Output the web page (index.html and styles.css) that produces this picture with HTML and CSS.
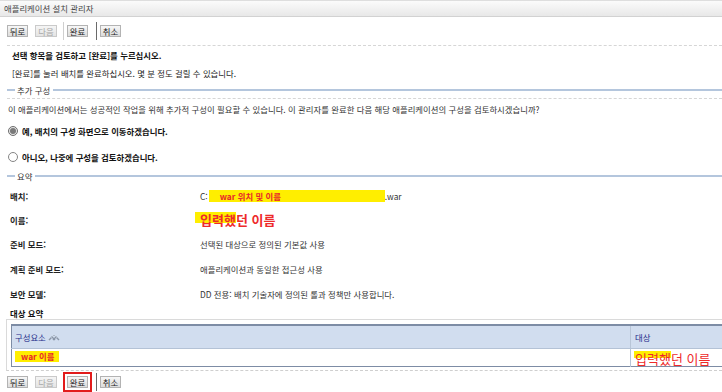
FILE: index.html
```html
<!DOCTYPE html>
<html lang="ko">
<head>
<meta charset="utf-8">
<title>애플리케이션 설치 관리자</title>
<link rel="stylesheet" href="styles.css">
</head>
<body>
<div class="titlebar">애플리케이션 설치 관리자</div>
<div class="page">
  <div class="toolbar">
    <button class="btn">뒤로</button>
    <button class="btn disabled b-next">다음</button>
    <span class="sep s1"></span>
    <button class="btn b-finish">완료</button>
    <span class="sep dark s2"></span>
    <button class="btn b-cancel">취소</button>
  </div>
  <div class="dash d1"></div>
  <p class="msg bold m1">선택 항목을 검토하고 [완료]를 누르십시오.</p>
  <p class="msg m2">[완료]를 눌러 배치를 완료하십시오. 몇 분 정도 걸릴 수 있습니다.</p>
  <div class="section sec1"><span>추가 구성</span></div>
  <div class="dash d2"></div>
  <p class="para">이 애플리케이션에서는 성공적인 작업을 위해 추가적 구성이 필요할 수 있습니다. 이 관리자를 완료한 다음 해당 애플리케이션의 구성을 검토하시겠습니까?</p>
  <label class="radio r1"><span class="dot checked"></span>예, 배치의 구성 화면으로 이동하겠습니다.</label>
  <label class="radio r2"><span class="dot"></span>아니오, 나중에 구성을 검토하겠습니다.</label>
  <div class="section sec2"><span>요약</span></div>
  <div class="summary">
    <div class="lbl">배치:</div>
    <div class="val">C:<span class="hl-path">war 위치 및 이름</span>.war</div>
    <div class="lbl">이름:</div>
    <div class="val"><span class="bigname"><span class="hl-name">입력했</span>던 이름</span></div>
    <div class="lbl">준비 모드:</div>
    <div class="val">선택된 대상으로 정의된 기본값 사용</div>
    <div class="lbl">계획 준비 모드:</div>
    <div class="val">애플리케이션과 동일한 접근성 사용</div>
    <div class="lbl">보안 모델:</div>
    <div class="val">DD 전용: 배치 기술자에 정의된 롤과 정책만 사용합니다.</div>
  </div>
  <div class="target-title">대상 요약</div>
  <div class="tablebox">
    <table class="grid">
      <thead>
        <tr>
          <th class="c1">구성요소 <svg class="sort" width="12" height="8" viewBox="0 0 12 8"><polyline points="1,6 4,3 7,6" fill="none" stroke="#8a96a8" stroke-width="1.4"/><polyline points="5,6 8,3 11,6" fill="none" stroke="#8a96a8" stroke-width="1.4"/><polyline points="3,4 6,1 9,4" fill="none" stroke="#b0bac8" stroke-width="1"/></svg></th>
          <th class="c2">대상</th>
        </tr>
      </thead>
      <tbody>
        <tr>
          <td class="c1"><span class="hl-war">war 이름</span></td>
          <td class="c2"><span class="cellname"><span class="hl-cell">입력했</span>던 이름</span></td>
        </tr>
      </tbody>
    </table>
  </div>
  <div class="toolbar bottom">
    <button class="btn">뒤로</button>
    <button class="btn disabled b-next">다음</button>
    <span class="sep s1"></span>
    <button class="btn b-finish marked">완료</button>
    <span class="sep dark s2"></span>
    <button class="btn b-cancel">취소</button>
  </div>
</div>
</body>
</html>
```
FILE: styles.css
```css
html, body {
  margin: 0;
  padding: 0;
  overflow: hidden;
  background: #fff;
}
body {
  width: 722px;
  height: 392px;
  font-family: "Noto Sans CJK KR", "Liberation Sans", sans-serif;
  font-size: 8.4px;
  color: #333;
}
.titlebar {
  height: 15px;
  line-height: 15px;
  border-top: 1px solid #dedede;
  border-bottom: 1px solid #d2d2d2;
  background: linear-gradient(#fbfbfb, #e8e8e8);
  padding-left: 4px;
  color: #444;
}
.page {
  padding-left: 7px;
}
.toolbar {
  display: flex;
  align-items: center;
  height: 18px;
  margin-top: 5px;
}
.toolbar.bottom {
  margin-top: 2px;
}
.btn {
  box-sizing: border-box;
  width: 21px;
  height: 12px;
  padding: 0;
  border: 1px solid #b3b3b3;
  background: linear-gradient(#f7f7f7, #dcdcdc);
  font-family: inherit;
  font-size: 8.4px;
  line-height: 10px;
  color: #222;
  text-align: center;
}
.btn.disabled {
  color: #a8a8a8;
  border-color: #cacaca;
  background: linear-gradient(#f5f5f5, #e4e4e4);
}
.b-next { width: 22px; margin-left: 7px; }
.b-finish { margin-left: 3px; }
.b-cancel { margin-left: 3px; }
.btn.marked {
  outline: 2px solid #e21b1b;
  outline-offset: 2px;
}
.sep {
  width: 1px;
  height: 18px;
  background: #cfcfcf;
}
.sep.s1 { margin-left: 6px; }
.sep.s2 { margin-left: 8px; background: #6a6a6a; }
.dash {
  border-top: 1px dashed #d6d6d6;
}
.d1 { margin-top: 5px; }
.d2 { margin-top: 2px; }
.msg {
  margin: 0;
  padding-left: 5px;
  height: 12px;
  line-height: 12px;
  color: #222;
}
.bold { font-weight: bold; color: #111; }
.m1 { margin-top: 3px; }
.m2 { margin-top: 6px; }
.section {
  display: flex;
  align-items: center;
  height: 12px;
  color: #333;
}
.section::before {
  content: "";
  width: 8px;
  height: 2px;
  background: #b4c6dd;
  margin-right: 2px;
}
.section::after {
  content: "";
  flex: 1;
  height: 2px;
  background: #b4c6dd;
  margin-left: 3px;
}
.sec1 { margin-top: 5px; }
.sec2 { margin-top: 7px; }
.para {
  margin: 4px 0 0 1px;
  height: 12px;
  line-height: 12px;
  color: #333;
  white-space: nowrap;
}
.radio {
  display: flex;
  align-items: center;
  height: 12px;
  margin-left: 1px;
  font-weight: bold;
  color: #111;
}
.r1 { margin-top: 10px; }
.r2 { margin-top: 14px; }
.dot {
  box-sizing: border-box;
  width: 10px;
  height: 10px;
  border: 1px solid #858585;
  border-radius: 50%;
  background: #fff;
  margin-right: 4px;
  display: flex;
  align-items: center;
  justify-content: center;
}
.dot.checked {
  border-color: #6d6d6d;
  background: #e6e6e6;
}
.dot.checked::after {
  content: "";
  width: 6px;
  height: 6px;
  border-radius: 50%;
  background: #7a7a7a;
}
.summary {
  display: grid;
  grid-template-columns: 190px 1fr;
  grid-template-rows: 24px 23px 25px 25px 26px;
  align-items: center;
  margin-top: 2px;
  padding-left: 3px;
}
.lbl {
  color: #222;
  font-weight: 600;
}
.val {
  color: #333;
  white-space: nowrap;
  display: flex;
  align-items: center;
}
.hl-path {
  display: inline-block;
  width: 165px;
  height: 12px;
  line-height: 12px;
  background: #ffee00;
  color: #e8262a;
  font-weight: bold;
  padding-left: 11px;
  margin-left: 1px;
}
.bigname {
  font-size: 13px;
  font-weight: bold;
  color: #ee2a2a;
  line-height: 14px;
}
.hl-name {
  background: linear-gradient(to bottom, transparent 2px, #ffee00 2px, #ffee00 13px, transparent 13px);
  padding-left: 5px;
  margin-left: -5px;
}
.target-title {
  height: 12px;
  line-height: 12px;
  padding-left: 3px;
  color: #111;
  font-weight: 600;
}
.tablebox {
  box-sizing: border-box;
  width: 716px;
  margin-left: -1px;
  border-top: 1px solid #dadada;
  border-left: 1px solid #dadada;
  border-bottom: 1px dashed #cfcfcf;
  padding: 4px 0 3px 4px;
}
.grid {
  border-collapse: collapse;
  width: 100%;
  border-top: 2px solid #7d8ca5;
  border-bottom: 1px solid #7d8ca5;
  border-left: 1px solid #7d8ca5;
}
.grid th {
  height: 22px;
  background: #d1ddef;
  font-weight: normal;
  text-align: left;
  color: #1f2b8a;
  padding: 0 0 0 3px;
  border-bottom: 1px solid #b4c2d6;
}
.grid td {
  height: 14px;
  padding: 0 0 0 3px;
  vertical-align: top;
}
.grid .c1 { width: 615px; }
.grid .c2 { border-left: 1px solid #b8c5d7; padding-left: 4px; white-space: nowrap; }
.sort { vertical-align: -1px; }
.hl-war {
  display: inline-block;
  width: 38px;
  height: 11px;
  line-height: 11px;
  background: #ffee00;
  color: #e8262a;
  font-weight: bold;
  padding-left: 6px;
  margin-top: 2px;
}
.cellname {
  display: inline-block;
  font-size: 13px;
  line-height: 13px;
  color: #ee2a2a;
  margin-top: 3px;
  margin-left: -1px;
}
.hl-cell {
  background: linear-gradient(to bottom, transparent 2px, #ffee00 2px, #ffee00 9px, transparent 9px);
  padding-left: 1px;
}
```
